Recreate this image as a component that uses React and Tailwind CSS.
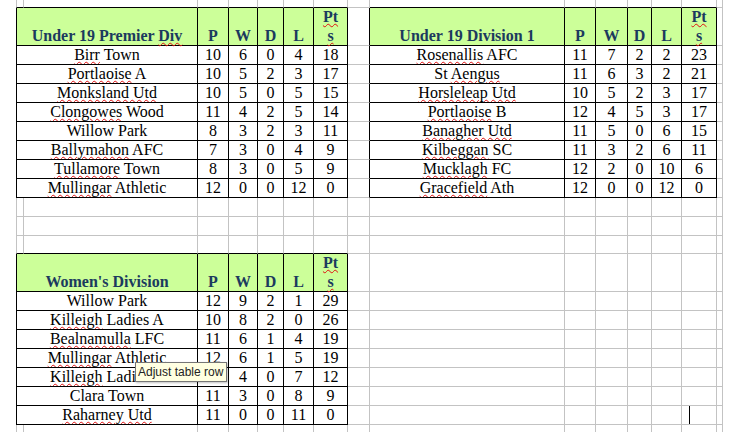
import React from 'react';

const premier = {
  title: 'Under 19 Premier ~Div~',
  rows: [
    ['~Birr~ Town', 10, 6, 0, 4, 18],
    ['~Portlaoise~ A', 10, 5, 2, 3, 17],
    ['~Monksland Utd~', 10, 5, 0, 5, 15],
    ['~Clongowes~ Wood', 11, 4, 2, 5, 14],
    ['Willow Park', 8, 3, 2, 3, 11],
    ['~Ballymahon~ AFC', 7, 3, 0, 4, 9],
    ['~Tullamore~ Town', 8, 3, 0, 5, 9],
    ['~Mullingar~ Athletic', 12, 0, 0, 12, 0],
  ],
};

const division1 = {
  title: 'Under 19 Division 1',
  rows: [
    ['~Rosenallis~ AFC', 11, 7, 2, 2, 23],
    ['St ~Aengus~', 11, 6, 3, 2, 21],
    ['~Horsleleap Utd~', 10, 5, 2, 3, 17],
    ['~Portlaoise~ B', 12, 4, 5, 3, 17],
    ['~Banagher Utd~', 11, 5, 0, 6, 15],
    ['~Kilbeggan~ SC', 11, 3, 2, 6, 11],
    ['~Mucklagh~ FC', 12, 2, 0, 10, 6],
    ['~Gracefield~ Ath', 12, 0, 0, 12, 0],
  ],
};

const womens = {
  title: "Women's Division",
  rows: [
    ['Willow Park', 12, 9, 2, 1, 29],
    ['~Killeigh~ Ladies A', 10, 8, 2, 0, 26],
    ['~Bealnamulla~ LFC', 11, 6, 1, 4, 19],
    ['~Mullingar~ Athletic', 12, 6, 1, 5, 19],
    ['~Killeigh~ Ladies B', 11, 4, 0, 7, 12],
    ['Clara Town', 11, 3, 0, 8, 9],
    ['~Raharney Utd~', 11, 0, 0, 11, 0],
  ],
};

// k = black table border, g = grey gridline
const LINE = {
  r: { k: 'border-r border-r-black', g: 'border-r border-r-[#c3c3c3]' },
  b: { k: 'border-b border-b-black', g: 'border-b border-b-[#c3c3c3]' },
  l: { k: 'border-l border-l-black', g: 'border-l border-l-[#c3c3c3]' },
};

const Squiggle = ({ children }) => (
  <span className="underline decoration-wavy decoration-[#e01010] decoration-1 underline-offset-[1px]">
    {children}
  </span>
);

const rich = (text) =>
  String(text)
    .split('~')
    .map((part, i) => (i % 2 ? <Squiggle key={i}>{part}</Squiggle> : part));

function Cell({ l, r = 'g', b = 'g', span, className = '', children }) {
  const cls = [
    LINE.r[r],
    b && LINE.b[b],
    l && LINE.l[l],
    span && 'col-span-2',
    className,
  ]
    .filter(Boolean)
    .join(' ');
  return <div className={cls}>{children}</div>;
}

const headCls =
  'flex items-end justify-center bg-[#ccff99] font-bold text-[#1b3a5e] leading-[19px] text-center';
const bodyCls = 'text-center leading-[18px] whitespace-nowrap overflow-hidden';

// one row of a results table; i < 0 is the header row
function statRow(table, i, spanFirst, key) {
  const head = i < 0;
  const values = head ? [table.title, 'P', 'W', 'D', 'L', 'pts'] : table.rows[i];
  return values.map((v, j) => {
    let content = rich(v);
    if (v === 'pts') {
      content = (
        <>
          <Squiggle>Pt</Squiggle>
          <br />
          <Squiggle>s</Squiggle>
        </>
      );
    }
    return (
      <Cell
        key={`${key}-${j}`}
        r="k"
        b="k"
        l={spanFirst && j === 0 ? 'k' : null}
        span={spanFirst && j === 0}
        className={head ? headCls : bodyCls}
      >
        {head ? <div>{content}</div> : content}
      </Cell>
    );
  });
}

const inTable = (c) => c <= 6 || (c >= 8 && c <= 13);

export default function App() {
  const cells = [];

  // strip above the tables
  for (let c = 0; c < 15; c++) {
    cells.push(<Cell key={`top-${c}`} l={c === 0 ? 'g' : null} b={inTable(c) ? 'k' : 'g'} />);
  }

  // first band: two under 19 tables side by side
  for (let i = -1; i < 8; i++) {
    cells.push(...statRow(premier, i, true, `p${i}`));
    cells.push(<Cell key={`gapA-${i}`} r="k" />);
    cells.push(...statRow(division1, i, false, `d${i}`));
    cells.push(<Cell key={`edgeA-${i}`} />);
  }

  // empty rows between bands
  for (let k = 0; k < 3; k++) {
    for (let c = 0; c < 15; c++) {
      cells.push(
        <Cell key={`mid-${k}-${c}`} l={c === 0 ? 'g' : null} b={k === 2 && c <= 6 ? 'k' : 'g'} />
      );
    }
  }

  // second band: women's table and empty grid on the right
  for (let i = -1; i < 7; i++) {
    cells.push(...statRow(womens, i, true, `w${i}`));
    cells.push(<Cell key={`gapB-${i}`} />);
    for (let c = 8; c < 15; c++) {
      cells.push(
        <Cell key={`emp-${i}-${c}`}>
          {i === 6 && c === 13 && <div className="ml-[7px] h-full w-px bg-black" />}
        </Cell>
      );
    }
  }

  // strip below
  for (let c = 0; c < 15; c++) {
    cells.push(<Cell key={`bot-${c}`} l={c === 0 ? 'g' : null} b={null} />);
  }

  return (
    <div className="relative w-[743px] h-[432px] overflow-hidden bg-white font-['Liberation_Serif','Times_New_Roman',serif] text-[16px] text-black">
      <div className="ml-[16px] grid grid-cols-[8px_174px_31px_29px_26px_30px_34px_22px_195px_31px_32px_24px_30px_35px_6px] grid-rows-[8px_38px_repeat(8,19px)_19px_19px_18px_38px_repeat(7,19px)_20px]">
        {cells}
      </div>

      <div className="absolute left-[135px] top-[362px] w-[92px] h-[20px] border border-[#767676] bg-[#ffffe1] shadow-[1px_1px_2px_rgba(0,0,0,0.25)] flex items-center pl-[2px] whitespace-nowrap font-['Liberation_Sans',Arial,sans-serif] text-[12px] leading-none text-[#222]">
        Adjust table row
      </div>
    </div>
  );
}
